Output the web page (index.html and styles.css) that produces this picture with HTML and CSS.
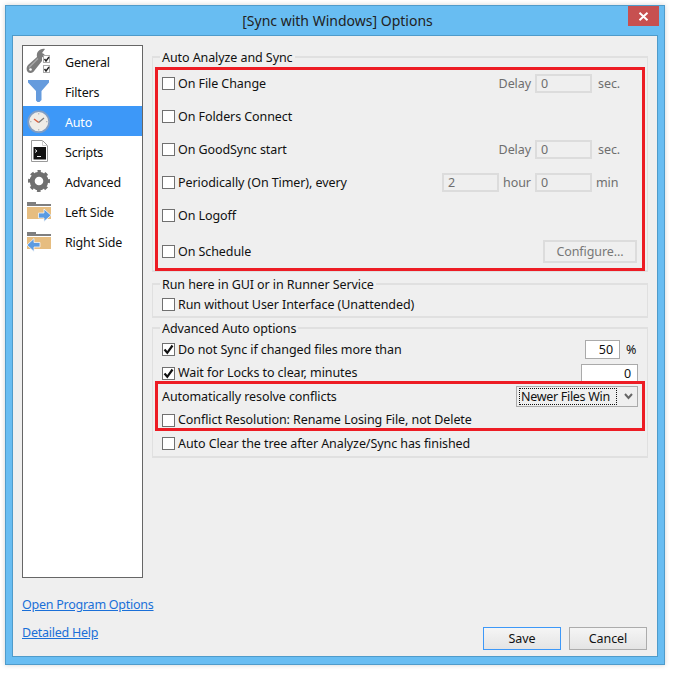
FILE: index.html
```html
<!DOCTYPE html>
<html lang="en">
<head>
<meta charset="utf-8">
<title>[Sync with Windows] Options</title>
<link rel="stylesheet" href="styles.css">
</head>
<body>
<div class="window">
  <header class="titlebar">
    <h1 class="title">[Sync with Windows] Options</h1>
    <button class="close" type="button" aria-label="Close"><svg width="11" height="9" viewBox="0 0 11 9"><path d="M1.5 0.8 L9.5 8.2 M9.5 0.8 L1.5 8.2" stroke="#fff" stroke-width="2" fill="none"/></svg></button>
  </header>
  <div class="client">
    <div class="top">
      <nav class="sidebar">
        <div class="nav-item"><span class="nav-icon">
          <svg width="30" height="30" viewBox="0 0 30 30"><path d="M22 3 C17 2 13 6 14 11 L5 19 C2.500 22 3.500 27 7.500 27 C9.500 27 10.500 26 11.500 24.500 L19 15 L19 11.500 L22 9.500 L21 8 L19 7 Z" fill="#7c7c7c"/><path d="M6 21.500 L15 12.500" stroke="#a8a8a8" stroke-width="1.500"/><circle cx="7.500" cy="23.500" r="1.300" fill="#fff"/><rect x="20.500" y="9.500" width="6" height="7" fill="#fff" stroke="#aaa"/><rect x="20.500" y="19.500" width="6" height="7" fill="#fff" stroke="#aaa"/><path d="M21.500 13 L23 15 L26 11 M21.500 23 L23 25 L26 21" stroke="#222" stroke-width="1.400" fill="none"/></svg>
        </span><span>General</span></div>
        <div class="nav-item"><span class="nav-icon">
          <svg width="30" height="30" viewBox="0 0 30 30"><path d="M5 4 H26 V6.500 L18.500 15 V24 L16.500 26 H14.500 L13 24.500 V15 L5 6.500 Z" fill="#659bdd"/></svg>
        </span><span>Filters</span></div>
        <div class="nav-item selected"><span class="nav-icon">
          <svg width="30" height="30" viewBox="0 0 30 30"><circle cx="15.700" cy="15.700" r="10.500" fill="#efece6" stroke="#7f9dc4" stroke-width="1.800"/><path d="M15.700 7 V8.500 M15.700 23 V24.500 M7 15.700 H8.500 M23 15.700 H24.500" stroke="#b9b9b9" stroke-width="1.200"/><path d="M15.700 16.500 L11 13" stroke="#d9603f" stroke-width="1.500"/><path d="M15.700 16.500 L21 12" stroke="#777" stroke-width="1.200"/></svg>
        </span><span>Auto</span></div>
        <div class="nav-item"><span class="nav-icon">
          <svg width="30" height="30" viewBox="0 0 30 30"><path d="M8.500 4.500 H19.500 L24.500 9.500 V25.500 H8.500 Z" fill="#fff" stroke="#9a9a9a"/><path d="M19.500 4.500 V9.500 H24.500" fill="none" stroke="#ccc"/><rect x="10.500" y="11" width="12.500" height="12.500" fill="#111"/><path d="M12 13.500 L14 15 L12 16.500" stroke="#eee" fill="none"/><path d="M14 20.500 H18" stroke="#eee"/></svg>
        </span><span>Scripts</span></div>
        <div class="nav-item"><span class="nav-icon">
          <svg width="30" height="30" viewBox="0 0 30 30"><circle cx="16" cy="15" r="6.800" fill="none" stroke="#707070" stroke-width="5"/><circle cx="16" cy="15" r="9.500" fill="none" stroke="#707070" stroke-width="3" stroke-dasharray="3.600 3.860" stroke-dashoffset="1.800" transform="rotate(-90 16 15)"/></svg>
        </span><span>Advanced</span></div>
        <div class="nav-item"><span class="nav-icon">
          <svg width="30" height="30" viewBox="0 0 30 30"><path d="M4 6 H13 V8 H28 V10 H4 Z" fill="#7f7f7f"/><rect x="4" y="11" width="24" height="12" fill="#e6bd80"/><path d="M15.500 17 H21 V13 L28 19.300 L21 25.500 V22 H15.500 Z" fill="#5a9be2" stroke="#f6f6f6" stroke-width="0.800"/></svg>
        </span><span>Left Side</span></div>
        <div class="nav-item"><span class="nav-icon">
          <svg width="30" height="30" viewBox="0 0 30 30"><path d="M4 6 H13 V8 H28 V10 H4 Z" fill="#7f7f7f"/><rect x="4" y="11" width="24" height="12" fill="#e6bd80"/><path d="M17 16.500 H11 V12.500 L4 19 L11 25.500 V21 H17 Z" fill="#5a9be2" stroke="#f6f6f6" stroke-width="0.800"/></svg>
        </span><span>Right Side</span></div>
      </nav>
      <main class="panels">
        <fieldset class="group group-auto">
          <legend>Auto Analyze and Sync</legend>
          <div class="row"><span class="check"></span><span class="grow">On File Change</span><span class="muted">Delay</span><span class="field">0</span><span class="muted unit-sec">sec.</span></div>
          <div class="row"><span class="check"></span><span class="grow">On Folders Connect</span></div>
          <div class="row"><span class="check"></span><span class="grow">On GoodSync start</span><span class="muted">Delay</span><span class="field">0</span><span class="muted unit-sec">sec.</span></div>
          <div class="row"><span class="check"></span><span class="grow">Periodically (On Timer), every</span><span class="field">2</span><span class="muted unit">hour</span><span class="field">0</span><span class="muted unit-min">min</span></div>
          <div class="row"><span class="check"></span><span class="grow">On Logoff</span></div>
          <div class="row row-last"><span class="check"></span><span class="grow">On Schedule</span><button class="btn-disabled" type="button">Configure...</button></div>
          <div class="redbox redbox-auto"></div>
        </fieldset>
        <fieldset class="group group-run">
          <legend>Run here in GUI or in Runner Service</legend>
          <div class="rows-run"><div class="row-tight"><span class="check"></span><span>Run without User Interface (Unattended)</span></div></div>
        </fieldset>
        <fieldset class="group group-adv">
          <legend>Advanced Auto options</legend>
          <div class="rows-adv">
          <div class="row-tight"><span class="check checked"><svg width="11" height="11" viewBox="0 0 11 11"><path d="M1.500 5.500 L4.300 8.800 L9.500 1.500" stroke="#111" stroke-width="2.200" fill="none"/></svg></span><span class="grow">Do not Sync if changed files more than</span><span class="value value-pct">50</span><span class="pct">%</span></div>
          <div class="row-tight"><span class="check checked"><svg width="11" height="11" viewBox="0 0 11 11"><path d="M1.500 5.500 L4.300 8.800 L9.500 1.500" stroke="#111" stroke-width="2.200" fill="none"/></svg></span><span class="grow">Wait for Locks to clear, minutes</span><span class="value value-min">0</span></div>
          <div class="row-tight"><span class="grow">Automatically resolve conflicts</span><div class="select"><span class="select-text">Newer Files Win</span><svg width="9" height="7" viewBox="0 0 9 7"><path d="M1 1 L4.500 5 L8 1" stroke="#666" stroke-width="2" fill="none"/></svg></div></div>
          <div class="row-tight"><span class="check"></span><span>Conflict Resolution: Rename Losing File, not Delete</span></div>
          <div class="row-tight"><span class="check"></span><span>Auto Clear the tree after Analyze/Sync has finished</span></div>
          </div>
          <div class="redbox redbox-adv"></div>
        </fieldset>
      </main>
    </div>
    <footer class="footer">
      <div class="links">
        <a class="link" href="#">Open Program Options</a>
        <a class="link" href="#">Detailed Help</a>
      </div>
      <div class="buttons">
        <button class="btn btn-default" type="button">Save</button>
        <button class="btn" type="button">Cancel</button>
      </div>
    </footer>
  </div>
</div>
</body>
</html>
```
FILE: styles.css
```css
* { box-sizing: border-box; }
html, body { margin: 0; height: 100%; background: #fff; }
body { padding: 5px 0 0 5px; font: 12.5px/16px "Noto Sans", Tahoma, sans-serif; letter-spacing: -0.08px; color: #111; }
.window { width: 660px; height: 660px; background: #68bdf2; border: 1px solid #4f9bca; box-shadow: 0 0 5px rgba(0,0,0,.18); display: flex; flex-direction: column; padding: 0 6px 7px 6px; }
.titlebar { height: 29px; position: relative; display: flex; align-items: center; justify-content: center; flex: none; }
.title { margin: 0; font-size: 14px; font-weight: 400; color: #222; letter-spacing: 0; padding: 1px 0 0 5px; }
.close { position: absolute; right: -1px; top: 0; width: 31px; height: 20px; border: 0; padding: 0; background: #c75050; display: flex; align-items: center; justify-content: center; }
.client { flex: 1; background: #efefef; border: 1px solid #4f9bca; padding: 9px 9px 6px 9px; display: flex; flex-direction: column; }
.top { display: flex; gap: 9px; height: 533px; flex: none; }
.sidebar { width: 121px; background: #fff; border: 1px solid #666; flex: none; display: flex; flex-direction: column; letter-spacing: -0.19px; }
.nav-item { height: 30px; display: flex; align-items: center; flex: none; padding-top: 1px; }
.nav-item.selected { background: #3d98f8; color: #fff; }
.nav-icon { width: 42px; height: 30px; margin-top: -1px; flex: none; display: block; }
.nav-icon svg { display: block; }
.nav-icon + span { margin-top: 2px; }
.panels { flex: 1; min-width: 0; padding-top: 4px; }
.group { position: relative; margin: 0; border: 1px solid #e0e0e0; border-width: 2px 1px 2px 1px; padding: 0 9px; min-width: 0; }
.group legend { padding: 2px 2px 0; margin-left: -2px; line-height: 14px; }
.group-auto { height: 223px; padding-top: 2px; }
.group-run { height: 42px; margin-top: 4px; }
.rows-run { padding-top: 1px; }
.group-adv { height: 138px; margin-top: 2px; }
.rows-adv { padding-top: 2px; }
.row { height: 33px; display: flex; align-items: center; padding-right: 1px; }
.row-last { margin-top: 3px; }
.row-tight { height: 23.5px; display: flex; align-items: center; }
.grow { flex: 1; min-width: 0; }
.check { width: 13px; height: 13px; border: 1px solid #707070; background: #fff; margin-right: 3px; flex: none; display: flex; align-items: center; justify-content: center; }
.muted { color: #6e6e6e; }
.field { width: 57px; height: 19px; border: 2px solid #dcdcdc; color: #6e6e6e; padding: 0 0 0 4px; line-height: 15px; margin-left: 4px; flex: none; }
.unit-sec { width: 45px; padding-left: 6px; }
.unit { width: 36px; padding-left: 4px; text-align: left; margin-right: -4px; }
.unit-min { width: 45px; padding-left: 4px; }
.btn-disabled { width: 94px; height: 23px; border: 2px solid #dcdcdc; background: #efefef; color: #777; font: inherit; letter-spacing: inherit; padding: 0; }
.value { height: 19px; background: #fff; border: 1px solid #aaa; text-align: right; padding-right: 6px; line-height: 17px; flex: none; }
.value-pct { width: 35px; }
.value-min { width: 57px; }
.pct { width: 18px; padding-left: 6px; flex: none; }
.select { width: 122px; height: 21px; border: 1px solid #aaa; display: flex; align-items: center; justify-content: space-between; padding: 1px 4px 1px 2px; background: #efefef; flex: none; }
.select-text { border: 1px dotted #111; padding: 0 1px; line-height: 15px; width: 98px; white-space: nowrap; letter-spacing: -0.3px; }
.redbox { position: absolute; border: 3px solid #ed1c24; pointer-events: none; }
.redbox-auto { left: 2px; right: 2px; top: 2px; height: 204px; }
.redbox-adv { left: 2px; right: 2px; top: 45px; height: 50px; }
.footer { flex: 1; display: flex; justify-content: space-between; align-items: flex-end; }
.links { display: flex; flex-direction: column; gap: 12px; padding-bottom: 9px; }
.link { color: #1a6fd8; line-height: 16px; letter-spacing: -0.25px; }
.buttons { display: flex; gap: 8px; padding-right: 1px; }
.btn { width: 78px; height: 23px; font: inherit; letter-spacing: inherit; color: #111; background: linear-gradient(#f5f5f5, #e4e4e4); border: 1px solid #acacac; padding: 0; }
.btn-default { border: 1px solid #3d98f8; }
```
